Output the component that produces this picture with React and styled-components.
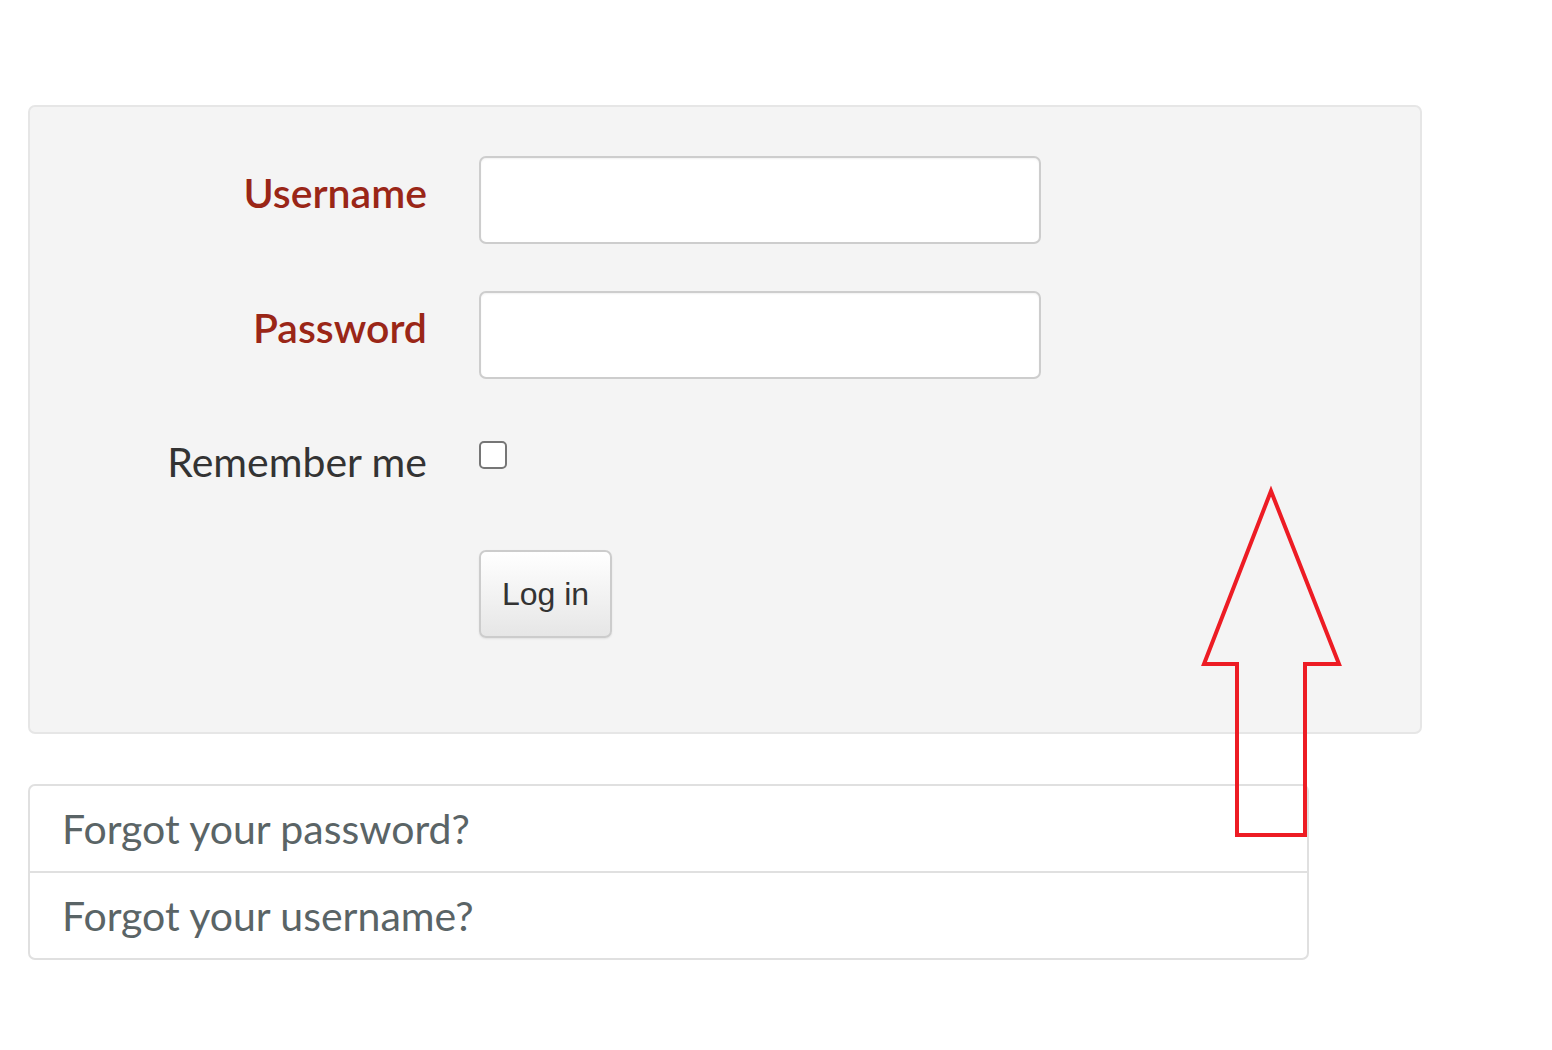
import React from "react";
import styled, { createGlobalStyle } from "styled-components";

const GlobalStyle = createGlobalStyle`
  body {
    margin: 0;
    background: #fff;
    font-family: Lato, "Open Sans", sans-serif;
  }
`;

const Page = styled.div`
  position: relative;
  width: 1552px;
  height: 1050px;
  padding: 105px 0 0 28px;
  box-sizing: border-box;
`;

const Well = styled.form`
  width: 1394px;
  box-sizing: border-box;
  background: #f4f4f4;
  border: 2px solid #e6e6e6;
  border-radius: 7px;
  padding: 49px 0 94px 0;
  display: grid;
  grid-template-columns: 397px 562px;
  column-gap: 52px;
  row-gap: 47px;
  align-items: center;
`;

const Label = styled.label`
  text-align: right;
  font-size: 41px;
  line-height: 1.2;
  margin-bottom: ${(p) => (p.$required ? "14px" : "6px")};
  font-weight: ${(p) => (p.$required ? 600 : 400)};
  color: ${(p) => (p.$required ? "#9a2617" : "#333")};
`;

const Input = styled.input`
  height: 88px;
  box-sizing: border-box;
  border: 2px solid #cdcdcd;
  border-radius: 7px;
  background: #fff;
  box-shadow: inset 0 1px 2px rgba(0, 0, 0, 0.06);
`;

const CheckCell = styled.div`
  height: 77px;
  display: flex;
  align-items: flex-start;
`;

const Check = styled.span`
  display: block;
  width: 28px;
  height: 28px;
  box-sizing: border-box;
  border: 2px solid #767676;
  border-radius: 5px;
  background: #fff;
  margin-top: 15px;
`;

const Button = styled.button`
  justify-self: start;
  width: 133px;
  height: 88px;
  border: 2px solid #cccccc;
  border-radius: 7px;
  background: linear-gradient(#ffffff, #e6e6e6);
  font-family: "Liberation Sans", Arial, sans-serif;
  font-size: 32px;
  color: #333;
  box-shadow: 0 1px 2px rgba(0, 0, 0, 0.08);
`;

const List = styled.ul`
  list-style: none;
  margin: 50px 0 0 0;
  padding: 0;
  width: 1281px;
  box-sizing: border-box;
  border: 2px solid #e0e0e0;
  border-radius: 7px;
`;

const Item = styled.li`
  height: 85px;
  display: flex;
  align-items: center;
  padding-left: 32px;
  font-size: 41px;
  color: #5a6466;
  & + & {
    border-top: 2px solid #e0e0e0;
  }
`;

const Arrow = styled.svg`
  position: absolute;
  left: 1198px;
  top: 485px;
`;

export default function App() {
  return (
    <Page>
      <GlobalStyle />
      <Well>
        <Label $required>Username</Label>
        <Input type="text" />
        <Label $required>Password</Label>
        <Input type="password" />
        <Label>Remember me</Label>
        <CheckCell>
          <Check />
        </CheckCell>
        <span />
        <Button type="button">Log in</Button>
      </Well>
      <List>
        <Item>Forgot your password?</Item>
        <Item>Forgot your username?</Item>
      </List>
      <Arrow width="150" height="360" viewBox="1198 485 150 360">
        <polygon
          points="1271,491 1204,664 1237,664 1237,835 1305,835 1305,664 1339,664"
          fill="none"
          stroke="#ed1c24"
          strokeWidth="4"
        />
      </Arrow>
    </Page>
  );
}
